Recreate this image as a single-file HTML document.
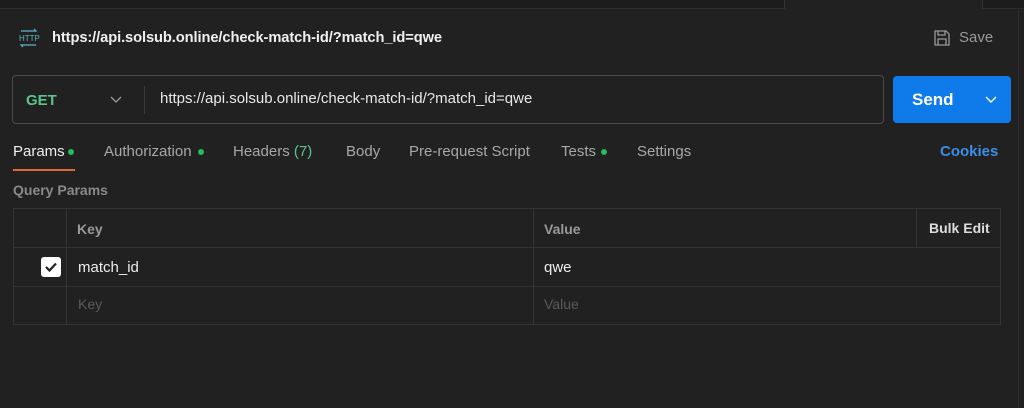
<!DOCTYPE html>
<html><head><style>
*{box-sizing:border-box;margin:0;padding:0}
body{width:1024px;height:408px;background:#212121;font-family:"Liberation Sans",sans-serif;position:relative;overflow:hidden;color:#ccc}
.a{position:absolute;white-space:nowrap}
</style></head><body>
<div class="a" style="left:0;top:0;width:1024px;height:9px;background:#1c1c1c;border-bottom:1px solid #2e2e2e"></div>
<div class="a" style="left:784px;top:0;width:1px;height:9px;background:#333"></div>
<div class="a" style="left:982px;top:0;width:1px;height:9px;background:#333"></div>
<div class="a" style="left:785px;top:0;width:197px;height:10px;background:#212121"></div>
<div class="a" style="left:1018px;top:10px;width:1px;height:398px;background:#2c2c2c"></div>

<svg class="a" style="left:18px;top:28px" width="22" height="20" viewBox="0 0 22 20"><path d="M3 3h15l-2-2M18 17H3l2 2" stroke="#5fb6c4" stroke-width="1.2" fill="none"/><text x="1" y="13" font-size="8" fill="#5fb6c4" font-family="Liberation Sans">HTTP</text></svg>
<div class="a" style="left:52px;top:30px;font-size:14.7px;font-weight:bold;color:#f0f0f0;letter-spacing:-0.1px">https://api.solsub.online/check-match-id/?match_id=qwe</div>

<svg class="a" style="left:933px;top:29px" width="18" height="18" viewBox="0 0 18 18"><path d="M2 2h11l3 3v11H2z M5 2v4h7V2 M5 16v-6h8v6" stroke="#999" stroke-width="1.3" fill="none"/></svg>
<div class="a" style="left:959px;top:29px;font-size:15px;color:#999">Save</div>

<div class="a" style="left:12px;top:75px;width:872px;height:49px;border:1px solid #4a4a4a;border-radius:4px"></div>
<div class="a" style="left:26px;top:92px;font-size:15px;font-weight:bold;color:#5bc38a">GET</div>
<svg class="a" style="left:110px;top:94px" width="12" height="10"><path d="M1 3l5 5 5-5" stroke="#999" stroke-width="1.3" fill="none"/></svg>
<div class="a" style="left:144px;top:86px;width:1px;height:28px;background:#3a3a3a"></div>
<div class="a" style="left:160px;top:90px;font-size:15px;color:#e8e8e8">https://api.solsub.online/check-match-id/?match_id=qwe</div>

<div class="a" style="left:893px;top:76px;width:118px;height:47px;background:#0f7bea;border-radius:4px"></div>
<div class="a" style="left:912px;top:90px;font-size:17px;font-weight:bold;color:#fff">Send</div>
<svg class="a" style="left:985px;top:95px" width="12" height="10"><path d="M1 2l5 5 5-5" stroke="#fff" stroke-width="1.4" fill="none"/></svg>

<div class="a" style="left:13px;top:143px;font-size:15px;color:#eee">Params</div>
<div class="a" style="left:68px;top:149px;width:6px;height:6px;border-radius:50%;background:#1fbf5c"></div>
<div class="a" style="left:13px;top:169px;width:62px;height:2px;background:#e0683e"></div>
<div class="a" style="left:104px;top:143px;font-size:15px;color:#a8a8a8">Authorization</div>
<div class="a" style="left:198px;top:149px;width:6px;height:6px;border-radius:50%;background:#1fbf5c"></div>
<div class="a" style="left:233px;top:143px;font-size:15px;color:#a8a8a8">Headers <span style="color:#5bc38a">(7)</span></div>
<div class="a" style="left:346px;top:143px;font-size:15px;color:#a8a8a8">Body</div>
<div class="a" style="left:409px;top:143px;font-size:15px;color:#a8a8a8">Pre-request Script</div>
<div class="a" style="left:561px;top:143px;font-size:15px;color:#a8a8a8">Tests</div>
<div class="a" style="left:601px;top:149px;width:6px;height:6px;border-radius:50%;background:#1fbf5c"></div>
<div class="a" style="left:637px;top:143px;font-size:15px;color:#a8a8a8">Settings</div>
<div class="a" style="left:940px;top:143px;font-size:15px;font-weight:bold;color:#3a8ee6">Cookies</div>

<div class="a" style="left:13px;top:182px;font-size:14px;font-weight:bold;color:#8a8a8a">Query Params</div>

<div class="a" style="left:13px;top:208px;width:988px;height:117px;border:1px solid #333"></div>
<div class="a" style="left:13px;top:247px;width:988px;height:1px;background:#333"></div>
<div class="a" style="left:13px;top:286px;width:988px;height:1px;background:#333"></div>
<div class="a" style="left:66px;top:208px;width:1px;height:117px;background:#333"></div>
<div class="a" style="left:533px;top:208px;width:1px;height:117px;background:#333"></div>
<div class="a" style="left:916px;top:208px;width:1px;height:39px;background:#333"></div>

<div class="a" style="left:77px;top:221px;font-size:14px;font-weight:bold;color:#999">Key</div>
<div class="a" style="left:544px;top:221px;font-size:14px;font-weight:bold;color:#999">Value</div>
<div class="a" style="left:929px;top:220px;font-size:14px;font-weight:bold;color:#ddd">Bulk Edit</div>

<div class="a" style="left:41px;top:257px;width:20px;height:20px;border-radius:3px;background:#fff"></div>
<svg class="a" style="left:41px;top:257px" width="20" height="20"><path d="M5 10l3.5 3.5L15 6.5" stroke="#222" stroke-width="2.2" fill="none"/></svg>
<div class="a" style="left:78px;top:259px;font-size:15px;color:#eee">match_id</div>
<div class="a" style="left:544px;top:259px;font-size:15px;color:#eee">qwe</div>
<div class="a" style="left:78px;top:296px;font-size:14px;color:#5a5a5a">Key</div>
<div class="a" style="left:544px;top:296px;font-size:14px;color:#5a5a5a">Value</div>
</body></html>
